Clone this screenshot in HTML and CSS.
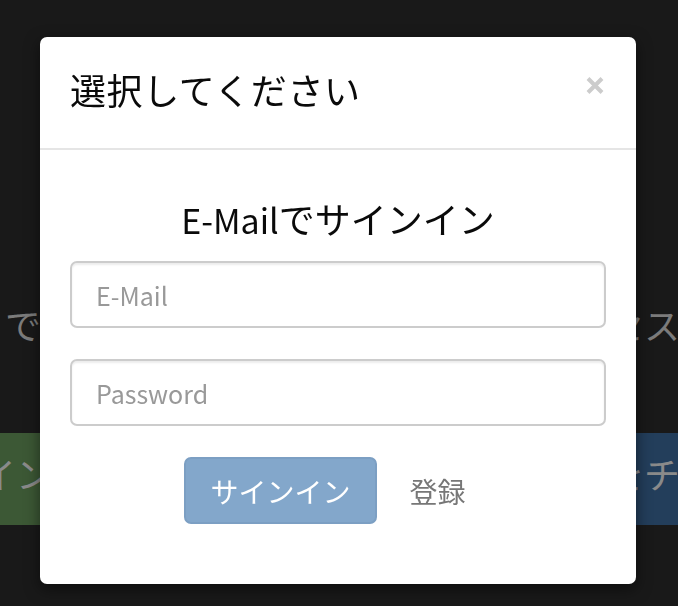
FILE: index.html
```html
<!DOCTYPE html>
<html lang="ja">
<head>
<meta charset="utf-8">
<title>選択してください</title>
<link rel="stylesheet" href="styles.css">
</head>
<body>
<div class="page">
  <div class="bg-text">
    <span class="bg-text-left">でログインしてください</span>
    <span class="bg-text-right">またはアクセス</span>
  </div>
  <div class="bg-actions">
    <div class="bg-btn bg-btn-green">サインイン</div>
    <div class="bg-btn bg-btn-blue">をチェック</div>
  </div>
</div>

<div class="modal">
  <div class="modal-header">
    <h4 class="modal-title">選択してください</h4>
    <button class="close" type="button" aria-label="Close">
      <svg class="close-icon" width="18" height="17" viewBox="0 0 18 17" aria-hidden="true">
        <path d="M2 1.5 L16 15.5 M16 1.5 L2 15.5" stroke="#cccccc" stroke-width="4" fill="none"/>
      </svg>
    </button>
  </div>
  <div class="modal-body">
    <h4 class="signin-heading"><span class="latin">E-Mail</span>でサインイン</h4>
    <input class="form-control" type="email" placeholder="E-Mail">
    <input class="form-control" type="password" placeholder="Password">
    <div class="actions">
      <button class="btn btn-primary" type="button" disabled>サインイン</button>
      <button class="btn btn-link" type="button">登録</button>
    </div>
  </div>
</div>
</body>
</html>
```

FILE: styles.css
```css
html, body {
  margin: 0;
  padding: 0;
}

body {
  width: 678px;
  height: 606px;
  overflow: hidden;
  background: #191919;
  font-family: "Noto Sans CJK JP", "Noto Sans", sans-serif;
}

.page {
  padding-top: 300px;
}

.bg-text {
  display: flex;
  justify-content: space-between;
  font-size: 36px;
  line-height: 48px;
  color: #7b7b7b;
  white-space: nowrap;
}

.bg-text-left {
  margin-left: 5px;
}

.bg-text-right {
  margin-right: -2px;
}

.bg-actions {
  margin-top: 85px;
  display: flex;
  justify-content: space-between;
}

.bg-btn {
  width: 200px;
  height: 92px;
  line-height: 80px;
  font-size: 36px;
  color: #8a8a8a;
  white-space: nowrap;
  overflow: hidden;
  box-sizing: border-box;
}

.bg-btn-green {
  background: #3c5835;
  margin-left: -124px;
  text-align: right;
  padding-right: 24px;
  direction: rtl;
}

.bg-btn-blue {
  background: #233e5b;
  margin-right: -106px;
  padding-left: 24px;
}

.modal {
  position: fixed;
  left: 40px;
  top: 37px;
  width: 596px;
  background: #ffffff;
  border-radius: 7px;
  box-shadow: 0 5px 15px rgba(0, 0, 0, 0.5);
}

.modal-header {
  display: flex;
  justify-content: space-between;
  align-items: flex-start;
  padding: 32px 32px 39px 30px;
  border-bottom: 2px solid #e5e5e5;
}

.modal-title {
  margin: 0;
  font-size: 36px;
  line-height: 40px;
  font-weight: 400;
  letter-spacing: 0.6px;
  color: #0a0a0a;
}

.close {
  margin: 8px 0 0 0;
  padding: 0;
  border: 0;
  background: transparent;
  display: flex;
}

.close-icon {
  display: block;
}

.modal-body {
  padding: 48px 30px 60px;
  display: flex;
  flex-direction: column;
}

.signin-heading {
  margin: 0 0 23px;
  height: 40px;
  text-align: center;
  font-size: 36px;
  line-height: 40px;
  font-weight: 400;
  color: #0a0a0a;
}

.latin {
  font-size: 34px;
  line-height: 1;
}

.form-control {
  box-sizing: border-box;
  width: 100%;
  height: 67px;
  margin: 0 0 31px;
  padding: 0 24px;
  border: 2px solid #cccccc;
  border-radius: 7px;
  box-shadow: inset 0 2px 2px rgba(0, 0, 0, 0.075);
  font-family: "Noto Sans CJK JP", sans-serif;
  font-size: 25px;
  color: #555555;
  background: #ffffff;
}

.form-control::placeholder {
  color: #999999;
}

.actions {
  display: flex;
  justify-content: center;
  gap: 7px;
}

.btn {
  box-sizing: border-box;
  height: 67px;
  padding: 0 24px;
  border: 2px solid transparent;
  border-radius: 7px;
  font-family: "Noto Sans CJK JP", sans-serif;
  font-size: 28px;
  line-height: 1;
  background: transparent;
}

.btn-primary {
  background: #83a7cb;
  border-color: #7c9fc3;
  color: #ffffff;
}

.btn-link {
  color: #777777;
}
```
